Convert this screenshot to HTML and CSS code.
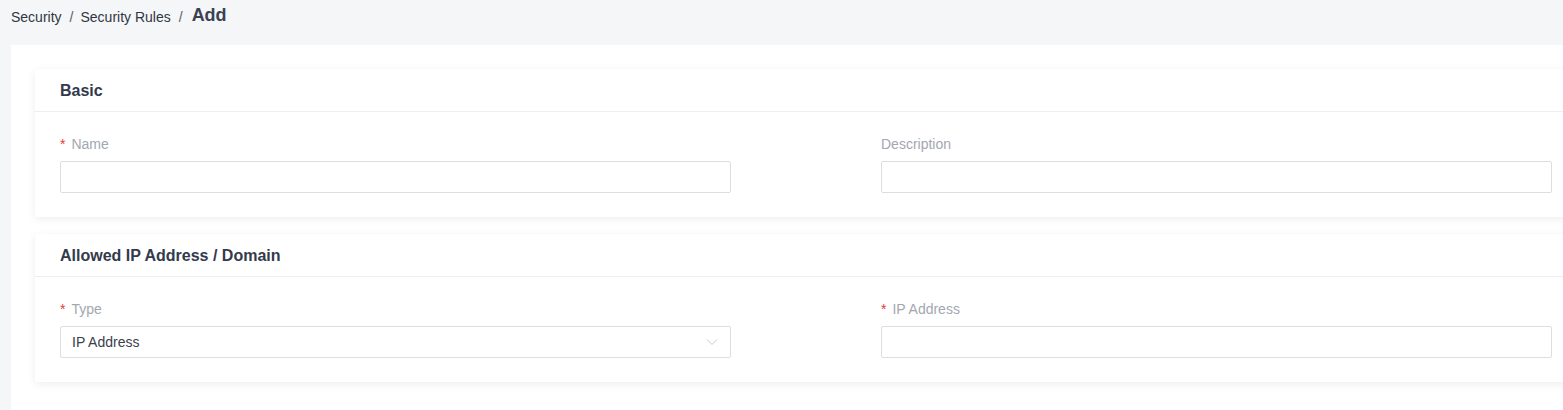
FILE: index.html
```html
<!DOCTYPE html>
<html lang="en">
<head>
<meta charset="UTF-8">
<meta name="viewport" content="width=device-width, initial-scale=1.0">
<title>Security Rules - Add</title>
<link rel="stylesheet" href="styles.css">
</head>
<body>

<div class="crumbs">
  <span class="crumb">Security</span>
  <span class="sep">/</span>
  <span class="crumb">Security Rules</span>
  <span class="sep">/</span>
  <span class="crumb current">Add</span>
</div>

<div class="page">

  <div class="card"> <!-- Basic -->
    <div class="card-head">Basic</div>
    <div class="card-body">
      <div class="field">
        <label class="label"><span class="req">*</span>Name</label>
        <div class="input"></div>
      </div>
      <div class="field">
        <label class="label">Description</label>
        <div class="input"></div>
      </div>
    </div>
  </div>

  <div class="card"> <!-- Allowed IP -->
    <div class="card-head">Allowed IP Address / Domain</div>
    <div class="card-body">
      <div class="field">
        <label class="label"><span class="req">*</span>Type</label>
        <div class="input select">
          <span>IP Address</span>
          <svg class="arrow" width="12" height="12" viewBox="0 0 12 12"><path d="M1 3.5 L6 8.5 L11 3.5" fill="none" stroke="#c8cbd1" stroke-width="1"/></svg>
        </div>
      </div>
      <div class="field">
        <label class="label"><span class="req">*</span>IP Address</label>
        <div class="input"></div>
      </div>
    </div>
  </div>

</div>

</body>
</html>
```

FILE: styles.css
```css
body, html {
  margin: 0;
  padding: 0;
  height: 100%;
  overflow: hidden;
}

body {
  background-color: #f5f6f8;
  font-family: "Liberation Sans", Arial, sans-serif;
  color: #303133;
}

.crumbs {
  height: 33px;
  padding: 0 11px;
  display: flex;
  align-items: center;
  font-size: 14px;
  color: #303642;
}

.sep {
  color: #555b66;
  margin: 0 7px 0 8px;
}

.crumb.current {
  font-size: 18px;
  font-weight: bold;
  color: #3a4153;
  margin-left: 2px;
  position: relative;
  top: -1px;
}

.page {
  margin-top: 12px;
  margin-left: 11px;
  width: 1542px; /* leveämpi kuin ikkuna, oikea reuna jää piiloon */
  min-height: 400px;
  background-color: #fff;
  padding: 24px;
  display: flex;
  flex-direction: column;
  gap: 17px;
}

.card {
  background-color: #fff;
  box-shadow: 0 2px 8px rgba(0, 0, 0, 0.07);
  border-radius: 2px;
}

.card-head {
  height: 42px;
  line-height: 43px;
  padding: 0 25px;
  font-size: 16px;
  font-weight: bold;
  color: #333a4c;
  border-bottom: 1px solid #ebeef2;
}

.card-body {
  padding: 22px 25px 24px;
  display: grid;
  grid-template-columns: 671px 671px;
  column-gap: 150px;
}

.label {
  display: block;
  height: 20px;
  line-height: 20px;
  margin-bottom: 7px;
  font-size: 14px;
  color: #a3a7b0;
}

.req {
  color: #e4393c;
  margin-right: 6px;
}

.input {
  box-sizing: border-box;
  height: 32px;
  border: 1px solid #dcdee2;
  border-radius: 2px;
  background-color: #fff;
}

.select {
  display: flex;
  align-items: center;
  justify-content: space-between;
  padding: 0 12px 0 11px;
  font-size: 14px;
  color: #3a404c;
}
```
